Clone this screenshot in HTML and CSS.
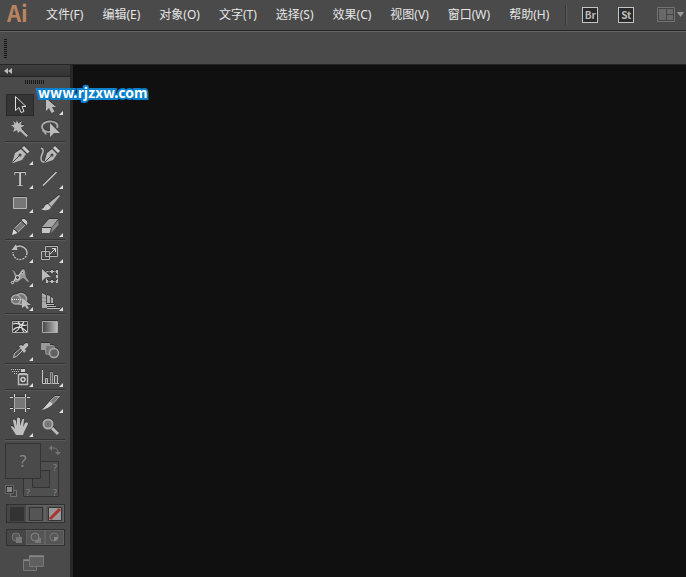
FILE: index.html
```html
<!DOCTYPE html>
<html lang="zh-CN">
<head>
<meta charset="utf-8">
<title>Ai</title>
<link rel="stylesheet" href="styles.css">
</head>
<body>
<header class="menubar">
  <span class="logo">Ai</span>
  <nav class="menus">
    <button>文件(F)</button><button>编辑(E)</button><button>对象(O)</button><button>文字(T)</button><button>选择(S)</button><button>效果(C)</button><button>视图(V)</button><button>窗口(W)</button><button>帮助(H)</button>
  </nav>
  <span class="divider"></span>
  <button class="app">Br</button>
  <button class="app">St</button>
  <button class="arrange" aria-label="Arrange documents">
    <svg width="28" height="16" viewBox="0 0 28 16"><path d="M.5.5h17v14H.5z" fill="#444" stroke="#737373"/><path d="M2 2h7v11H2zM10 2h6v5h-6zM10 8h6v5h-6z" fill="#696969"/><path d="M20 5h7l-3.500 5z" fill="#999"/></svg>
  </button>
</header>
<div class="controlbar"><span class="handle"></span></div>
<div class="workspace">
  <aside class="panel">
    <button class="collapse" aria-label="Collapse"><svg width="8" height="6" viewBox="0 0 8 6"><path d="M4 0v6L0 3zM8 0v6L4 3z" fill="#bbb"/></svg></button>
    <div class="grip"></div>
    <div class="tools">
      <div class="group">
        <button class="tool active" aria-label="Selection"><svg viewBox="0 0 30 24"><path d="M10.500 3.500v14l3.500-3 2 5 3-1-2-5h4z" fill="#333" stroke="#ddd"/></svg></button>
        <button class="tool more" aria-label="Direct selection"><svg viewBox="0 0 30 24"><path d="M11 5v13l3-3 2.500 5 3-1.500-2.500-4.500h4z" fill="#bbb"/></svg></button>
        <button class="tool" aria-label="Magic wand"><svg viewBox="0 0 30 24"><path d="M12 3l1.300 3.500L17 4l-1.500 3.500 4 1-3.500 2 1 2 6 6-1.500 1.500-6.500-6-2 2-1-3-4 2 1.500-4L6 8l3.500-.5L8 4l3 2z" fill="#b8b8b8"/></svg></button>
        <button class="tool" aria-label="Lasso"><svg viewBox="0 0 30 24"><path d="M10 14C4 10 8 5 14 4.500S24 7 22 11M10 14c2 1 4 1 6 .5M8.500 12.500c-2 3 3 1 2 5" fill="none" stroke="#aaa" stroke-width="1.800"/><path d="M15 6v14l4-4h6z" fill="#bbb"/></svg></button>
      </div>
      <div class="group">
        <button class="tool more" aria-label="Pen"><svg viewBox="0 0 30 24"><path d="M7 20l3-10 6-4 5 5-4 6-9 3z" fill="#b9b9b9"/><path d="M17 5l2-2 5.500 5.500-2 2z" fill="#ccc"/><path d="M7.500 19.500l7-7" stroke="#444"/><circle cx="15" cy="12" r="1.500" fill="#444"/></svg></button>
        <button class="tool" aria-label="Curvature"><svg viewBox="0 0 30 24"><path d="M9 20l3-10 5-4 5 5-4 6-9 3z" fill="#b9b9b9"/><path d="M18 5l2-2 5 5-2 2z" fill="#ccc"/><path d="M9.500 19.500l7-7" stroke="#444"/><circle cx="17" cy="12" r="1.500" fill="#444"/><path d="M6 5c5 2 0 6 0 10 0 3 1 4 3 4" fill="none" stroke="#bbb" stroke-width="1.500"/></svg></button>
        <button class="tool more" aria-label="Type"><svg viewBox="0 0 30 24"><text x="15" y="19" class="glyph-t">T</text></svg></button>
        <button class="tool more" aria-label="Line"><svg viewBox="0 0 30 24"><path d="M8 18.500L21.500 5" stroke="#c8c8c8" stroke-width="1.500"/></svg></button>
        <button class="tool more" aria-label="Rectangle"><svg viewBox="0 0 30 24"><path d="M8.500 6.500h13v11h-13z" fill="#777" stroke="#b5b5b5"/></svg></button>
        <button class="tool more" aria-label="Paintbrush"><svg viewBox="0 0 30 24"><path d="M24 4L13.500 12.500l3 3L25 5z" fill="#b5b5b5"/><path d="M6 18c4 0 3-5 7-5l3 3c-1 4-7 4-10 2z" fill="#c8c8c8"/></svg></button>
        <button class="tool more" aria-label="Pencil"><svg viewBox="0 0 30 24"><path d="M7 20l1.500-6 4 4z" fill="#ddd"/><path d="M9 13l7-7 4.500 4.500-7 7z" fill="#777"/><path d="M9.500 13.500l7-7M13 17l7-7" stroke="#a5a5a5"/><path d="M17 5c2-2 6 1 4.500 4.500z" fill="#ccc" stroke="#ccc"/></svg></button>
        <button class="tool more" aria-label="Eraser"><svg viewBox="0 0 30 24"><path d="M7 12l7-8h9l-6 8z" fill="#a5a5a5"/><path d="M7 13h9l-1.500 5H7z" fill="#c5c5c5"/><path d="M17 12.500L23.500 5v5L16 18z" fill="#888"/></svg></button>
      </div>
      <div class="group">
        <button class="tool more" aria-label="Rotate"><svg viewBox="0 0 30 24"><path d="M10 7c4-4 12-1 12 5" fill="none" stroke="#bbb" stroke-width="1.500"/><path d="M22 12a7 7 0 0 1-14-1" fill="none" stroke="#bbb" stroke-width="1.500" stroke-dasharray="2 1"/><path d="M6.500 9L11 3l1.500 6z" fill="#bbb"/></svg></button>
        <button class="tool more" aria-label="Scale"><svg viewBox="0 0 30 24"><g fill="none" stroke="#b5b5b5"><path d="M10.500 5.500h12v10h-12zM6.500 10.500h8v8h-8z"/><path d="M15 13l5-5M17 7.500h3.500V11" stroke="#ddd"/></g></svg></button>
        <button class="tool more" aria-label="Width"><svg viewBox="0 0 30 24"><path d="M7 5c3 0 3 3 5 5 3 0 3-5 6-6 3 0 2 5 3 8 1 2 3 3 3 5-3 0-4-4-6-4s-4 5-8 4c-3-1-1-3 0-5-1-3-1-5-3-7z" fill="#999"/><path d="M7 18L18 6" stroke="#ccc"/><g fill="#444" stroke="#ddd"><circle cx="7.500" cy="17.500" r="1.200"/><circle cx="12.500" cy="12.500" r="2"/><circle cx="17.500" cy="7.500" r="1.200"/></g></svg></button>
        <button class="tool" aria-label="Free transform"><svg viewBox="0 0 30 24"><path d="M11.500 6.500h11v10h-11z" fill="none" stroke="#bbb" stroke-dasharray="2 1"/><path d="M16 5h2v3h-2zM21 5h2v3h-2zM21 10h2v3h-2zM21 15h2v3h-2zM16 15h2v3h-2zM11 15h2v3h-2z" fill="#bbb"/><path d="M7 4l9 8h-5l-4 4z" fill="#bbb"/></svg></button>
        <button class="tool more" aria-label="Shape builder"><svg viewBox="0 0 30 24"><g fill="#777" stroke="#aaa" stroke-width="1.500"><circle cx="16" cy="10" r="5.500"/><circle cx="11" cy="10.500" r="4.500"/></g><path d="M7 10.500h10" stroke="#eee" stroke-dasharray="1 1"/><path d="M17 9v10l3-2 2 3 2-1-2-3h4z" fill="#bbb"/></svg></button>
        <button class="tool more" aria-label="Perspective grid"><svg viewBox="0 0 30 24"><path d="M7 4l4 2v9h-4zM12 6l3 1v7h-3zM16 8l2 1v5h-2zM7 15h5v4H7z" fill="#aaa"/><path d="M12 15.500h7M12 17.500h9M12 19.500h13" stroke="#bbb"/><path d="M7 8.500l4 1M7 12.500h4" stroke="#888"/></svg></button>
      </div>
      <div class="group">
        <button class="tool" aria-label="Mesh"><svg viewBox="0 0 30 24"><path d="M7.500 6.500h15v11h-15z" fill="#333" stroke="#aaa"/><path d="M8 9c5-3 7 3 14 1M8 15c5-5 9-3 14 2M13 7c4 3 1 8-3 10M19 7c-4 3-2 8 0 10" fill="none" stroke="#ddd" stroke-width="1.200"/></svg></button>
        <button class="tool" aria-label="Gradient"><svg viewBox="0 0 30 24"><defs><linearGradient id="ramp"><stop stop-color="#444"/><stop offset="1" stop-color="#c0c0c0"/></linearGradient></defs><path d="M7.500 6.500h15v11h-15z" fill="url(#ramp)" stroke="#aaa"/></svg></button>
        <button class="tool more" aria-label="Eyedropper"><svg viewBox="0 0 30 24"><path d="M8.500 18.500l1-4 7-6 2 2-7 7z" fill="#555" stroke="#c0c0c0"/><path d="M14 7l2-1 2 1c2-4 6-4 5 0l-3 3 1 2-2 2z" fill="#bbb"/></svg></button>
        <button class="tool" aria-label="Blend"><svg viewBox="0 0 30 24"><path d="M6 4h9v3h-4v4H6z" fill="#999"/><rect x="10.500" y="6.500" width="9" height="9" rx="2" fill="#777" stroke="#999"/><circle cx="19" cy="14" r="4.500" fill="#626262" stroke="#aaa" stroke-width="1.500"/></svg></button>
      </div>
      <div class="group">
        <button class="tool more" aria-label="Symbol sprayer"><svg viewBox="0 0 30 24"><path d="M13.500 9.500h9v10h-9z" fill="#444" stroke="#bbb" stroke-width="1.500"/><path d="M16 4h4v3h-4z" fill="#ccc"/><path d="M14 8.500h8" stroke="#bbb"/><circle cx="18" cy="14.500" r="2" fill="#444" stroke="#ccc" stroke-width="1.500"/><path d="M6 4.500h9M7 6.500h7M9 8.500h3" stroke="#ccc" stroke-dasharray="1 1"/></svg></button>
        <button class="tool more" aria-label="Column graph"><svg viewBox="0 0 30 24"><path d="M7.500 5v13.500H24" fill="none" stroke="#c5c5c5"/><path d="M10.500 13.500h2v5h-2zM19.500 10.500h3v8h-3z" fill="#555" stroke="#bbb"/><path d="M15.500 7.500h2v11h-2z" fill="#555" stroke="#999"/></svg></button>
      </div>
      <div class="group">
        <button class="tool" aria-label="Artboard"><svg viewBox="0 0 30 24"><path d="M9 7h12v10H9z" fill="#777"/><path d="M9.500 3v3M20.500 3v3M9.500 18v3M20.500 18v3M5 6.500h3M22 6.500h3M5 17.500h3M22 17.500h3" stroke="#ddd"/><path d="M9.500 6.500h11v11h-11z" fill="none" stroke="#aaa"/></svg></button>
        <button class="tool more" aria-label="Slice"><svg viewBox="0 0 30 24"><path d="M7 19l8-9 3 3c-3 3-7 5-11 6z" fill="#d0d0d0"/><path d="M15.500 9.500L20 5.500h4.500l-6 6.500z" fill="#777" stroke="#aaa"/></svg></button>
        <button class="tool more" aria-label="Hand"><svg viewBox="0 0 30 24"><path d="M11 20l-5-8c0-2 2-1 4 2L8 6c0-2 2-2 3 0l1 5V4c0-2 3-2 3 0v7l2-6c1-2 3-1 2 0l-1 7 2-4c1-1 3-1 3 1l-4 8-1 3z" fill="#bebebe"/></svg></button>
        <button class="tool" aria-label="Zoom"><svg viewBox="0 0 30 24"><path d="M17 13l6 6" stroke="#bbb" stroke-width="3"/><circle cx="13" cy="9" r="4.500" fill="#777" stroke="#aaa" stroke-width="2"/></svg></button>
      </div>
      <div class="group last">
        <svg class="paint" viewBox="0 0 60 60" role="img" aria-label="Fill and stroke">
          <path d="M18.500 20.500h35v35h-35z" fill="#4f4f4f" stroke="#333"/><path d="M27.500 29.500h17v17h-17z" fill="#4a4a4a" stroke="#333"/>
          <path d="M.5 2.500h35v35H.5z" fill="#4a4a4a" stroke="#333"/>
          <g class="marks"><text x="18" y="26" class="big">?</text><text x="50" y="30">?</text><text x="23" y="55">?</text><text x="50" y="55">?</text></g>
          <path d="M47 7h2c3 0 4 2 4 5" fill="none" stroke="#777"/><path d="M44 7l3-3v6zM50 11h6l-3 3z" fill="#777"/>
          <path d="M6.500 49.500h5v6h-6v-5z" fill="#444" stroke="#777"/><path d="M.5 44.500h8v8h-8z" fill="#333" stroke="#666"/><path d="M2 46h5v5H2z" fill="#888"/>
        </svg>
        <div class="segments modes">
          <button class="on" aria-label="Color"><svg width="14" height="14"><path d="M0 0h14v14H0z" fill="#333"/></svg></button>
          <button aria-label="Gradient fill"><svg width="14" height="14"><path d="M.5.5h13v13H.5z" fill="#555" stroke="#333"/></svg></button>
          <button aria-label="None"><svg width="14" height="14"><path d="M.5.5h13v13H.5z" fill="#999" stroke="#333"/><path d="M2 12L12 2" stroke="#ad3333" stroke-width="3"/></svg></button>
        </div>
        <div class="segments draw">
          <button class="on" aria-label="Draw normal"><svg width="12" height="12"><circle cx="5" cy="5" r="4" fill="#555" stroke="#777"/><path d="M5 5h6v6H5z" fill="#777"/></svg></button>
          <button aria-label="Draw behind"><svg width="12" height="12"><path d="M6 6h5v5H5z" fill="#777"/><circle cx="5" cy="5" r="4" fill="#5a5a5a" stroke="#858585"/></svg></button>
          <button aria-label="Draw inside"><svg width="12" height="12"><circle cx="5" cy="5" r="4" fill="#555" stroke="#777"/><path d="M5 5h4L7 9H5z" fill="#888"/></svg></button>
        </div>
        <button class="screen" aria-label="Screen mode"><svg width="21" height="16"><path d="M.5 4.500h13v11H.5z" fill="#555" stroke="#777"/><path d="M6.500.5h14v11h-14z" fill="#606060" stroke="#777"/><path d="M6 1.500h15M1 5.500h5" stroke="#888"/></svg></button>
      </div>
    </div>
    <span class="watermark">www.rjzxw.com</span>
  </aside>
  <main class="canvas"></main>
</div>
</body>
</html>
```
FILE: styles.css
```css
* { box-sizing: border-box; }
body {
  margin: 0;
  min-height: 100vh;
  display: flex;
  flex-direction: column;
  background: #101010;
  color: #e6e6e6;
  font: 12px/16px "Noto Sans", "Noto Sans CJK SC", sans-serif;
  overflow: hidden;
}
button { margin: 0; padding: 0; border: 0; background: none; color: inherit; font: inherit; }
svg { display: block; }
.menubar {
  display: flex;
  align-items: center;
  height: 31px;
  padding: 0 0 0 7px;
  background: #4a4a4a;
  border-bottom: 1px solid #252525;
}
.logo { width: 39px; padding-bottom: 6px; color: #b9845f; font: bold 22px/24px "Noto Sans CJK SC", sans-serif; }
.menus { display: flex; gap: 19px; white-space: nowrap; }
.divider { width: 2px; height: 20px; margin: 0 15px 0 16px; background: #333; border-right: 1px solid #5c5c5c; }
.app {
  width: 16px;
  height: 16px;
  margin-right: 20px;
  background: #2b2b2b;
  border: 1px solid #c5c5c5;
  color: #bbb;
  font: bold 10px/14px "Noto Sans CJK SC", sans-serif;
}
.arrange { margin-left: 3px; }
.controlbar {
  height: 34px;
  padding: 7px 4px;
  background: #4a4a4a;
  border-top: 1px solid #656565;
  border-bottom: 1px solid #252525;
}
.handle { display: block; width: 3px; height: 19px; background: repeating-linear-gradient(#151515 0 1px, #4a4a4a 1px 2px); }
.workspace { flex: 1; display: flex; }
.panel {
  position: relative;
  width: 73px;
  flex: none;
  background: #4a4a4a;
  border-right: 3px solid #282828;
}
.collapse { display: block; width: 100%; height: 12px; padding: 0 4px; background: linear-gradient(#3f3f3f, #333); border-bottom: 1px solid #252525; }
.grip { width: 20px; height: 4px; margin: 3px 0 9px 25px; background: repeating-linear-gradient(90deg, #181818 0 1px, #4a4a4a 1px 2px); }
.tools { width: 60px; margin-left: 5px; }
.group { display: grid; grid-template-columns: 1fr 1fr; border-bottom: 1px solid #333; box-shadow: 0 1px #595959; margin-bottom: 1px; }
.tool { position: relative; height: 24px; }
.tool svg { position: relative; width: 30px; height: 24px; filter: drop-shadow(0 -1px #333); }
.active::before { content: ""; position: absolute; inset: 1px; background: #353535; border: 1px solid #292929; }
.more::after { content: ""; position: absolute; right: 2px; bottom: 2px; border: 2px solid transparent; border-right-color: #e0e0e0; border-bottom-color: #e0e0e0; }
.glyph-t { font: 20px "Liberation Serif", serif; text-anchor: middle; fill: #c5c5c5; }
.last { display: block; border: 0; box-shadow: none; }
.paint { width: 60px; height: 60px; }
.marks { fill: #888; font: 9px "Noto Sans", sans-serif; text-anchor: middle; }
.big { font-size: 16px; }
.segments { display: flex; width: 59px; background: #555; border: 1px solid #303030; }
.segments button { flex: 1; display: grid; place-items: center; box-shadow: inset 0 0 0 1px #626262; }
.segments .on { background: #464646; box-shadow: none; }
.modes { height: 19px; margin: 3px 0 6px 1px; }
.draw { height: 17px; margin: 0 0 9px 1px; }
.screen { margin-left: 18px; }
.watermark {
  position: absolute;
  left: 38px;
  top: 17px;
  color: #fff;
  font: bold 14px/20px "Noto Sans CJK SC", sans-serif;
  -webkit-text-stroke: 4px #0b80cd;
  paint-order: stroke fill;
}
.canvas { flex: 1; background: #101010; }
```
